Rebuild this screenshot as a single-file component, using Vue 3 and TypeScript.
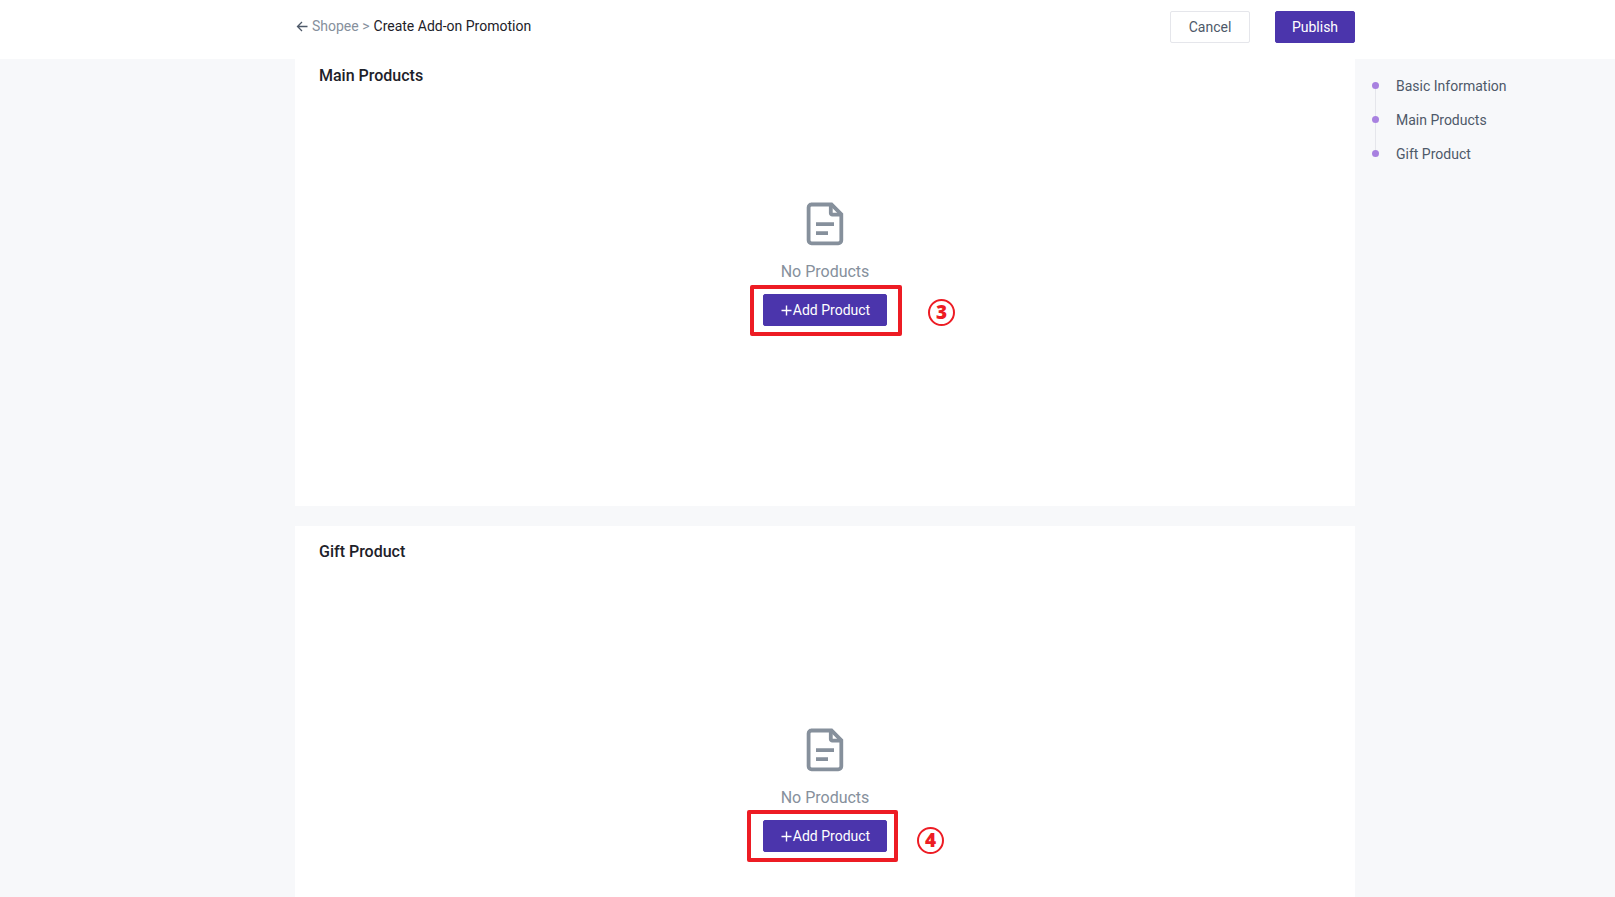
<script setup lang="ts">
interface Section {
  id: string
  title: string
  marker: string
}

const sections: Section[] = [
  { id: 'main', title: 'Main Products', marker: '3' },
  { id: 'gift', title: 'Gift Product', marker: '4' },
]

const anchors: { label: string; target: string }[] = [
  { label: 'Basic Information', target: '#basic' },
  { label: 'Main Products', target: '#main' },
  { label: 'Gift Product', target: '#gift' },
]
</script>

<template>
  <div class="page">
    <header class="topbar columns">
      <div class="topbar-inner">
        <nav class="breadcrumb" aria-label="Breadcrumb">
          <a class="back" href="#back" aria-label="Back">
            <svg width="12" height="12" viewBox="0 0 12 12" fill="none" stroke="currentColor" stroke-width="1.3">
              <path d="M11.5 6.5H1.5M6 2 1.5 6.5 6 11" />
            </svg>
          </a>
          <a class="parent" href="#shopee">Shopee &gt;</a>
          <span>Create Add-on Promotion</span>
        </nav>
        <div class="actions">
          <button type="button" class="btn plain">Cancel</button>
          <button type="button" class="btn primary">Publish</button>
        </div>
      </div>
    </header>

    <div class="body columns">
      <main class="cards">
        <section v-for="s in sections" :id="s.id" :key="s.id" class="card" :class="s.id">
          <h2>{{ s.title }}</h2>
          <div class="empty">
            <svg class="doc" width="38" height="44" viewBox="0 0 38 44" fill="none" stroke="#86909c" stroke-width="3.8">
              <path d="M5 2.5H25.5L35.3 12.3V38.3a3 3 0 0 1-3 3H5.6a3 3 0 0 1-3-3V5.5a3 3 0 0 1 3-3Z" />
              <path d="M24.8 2.8V11.2a1.5 1.5 0 0 0 1.5 1.5H35" />
              <path d="M10 22.2H28M10 31.2H22" />
            </svg>
            <p>No Products</p>
            <div class="add">
              <button type="button" class="btn primary wide">
                <svg width="12" height="12" viewBox="0 0 12 12" stroke="currentColor" stroke-width="1.4">
                  <path d="M6.5 1.5V11.5M1.5 6.5H11.5" />
                </svg>
                Add Product
              </button>
              <span class="frame"></span>
              <span class="marker">{{ s.marker }}</span>
            </div>
          </div>
        </section>
      </main>
      <nav class="anchors" aria-label="Sections">
        <ul>
          <li v-for="a in anchors" :key="a.target">
            <a :href="a.target">{{ a.label }}</a>
          </li>
        </ul>
      </nav>
    </div>
  </div>
</template>

<style>
body {
  margin: 0;
}
</style>

<style scoped>
.page {
  display: flex;
  flex-direction: column;
  height: 100vh;
  overflow: hidden;
  background: #f7f8fa;
  color: #1d2129;
  font: 14px/22px Roboto, "Liberation Sans", sans-serif;
}

a {
  color: inherit;
  text-decoration: none;
}

.columns {
  display: grid;
  grid-template-columns: minmax(0, 295fr) minmax(600px, 1060px) minmax(150px, 260fr);
}

.topbar {
  flex: none;
  height: 59px;
  background: #fff;
}

.topbar-inner {
  grid-column: 2;
  display: flex;
  justify-content: space-between;
  align-items: flex-start;
  padding-top: 11px;
}

.breadcrumb {
  display: flex;
  align-items: center;
  gap: 4px;
  margin-top: 4px;
}

.back {
  display: flex;
  margin-left: 1px;
  color: #4e5969;
}

.parent {
  color: #86909c;
}

.actions {
  display: flex;
  gap: 25px;
}

.btn {
  box-sizing: border-box;
  display: flex;
  align-items: center;
  justify-content: center;
  width: 80px;
  height: 32px;
  padding: 0;
  border: 1px solid #e5e6eb;
  border-radius: 2px;
  font: inherit;
  cursor: pointer;
}

.plain {
  background: #fff;
  color: #4e5969;
}

.primary {
  border-color: #4b35ac;
  background: #4b35ac;
  color: #fff;
}

.wide {
  width: 124px;
  gap: 1px;
}

.body {
  flex: 1;
  min-height: 0;
}

.cards {
  grid-column: 2;
  display: flex;
  flex-direction: column;
  gap: 20px;
  min-height: 0;
}

.card {
  flex: none;
  padding: 0 24px;
  background: #fff;
}

.main {
  padding-top: 5px;
  padding-bottom: 180px;
}

.gift {
  padding-top: 14px;
  padding-bottom: 180px;
}

h2 {
  margin: 0;
  font-size: 16px;
  font-weight: 500;
  line-height: 24px;
}

.empty {
  display: flex;
  flex-direction: column;
  align-items: center;
  padding-top: 114px;
}

.gift .empty {
  padding-top: 164px;
}

.doc {
  display: block;
}

.empty p {
  margin: 14px 0 10px;
  color: #86909c;
  font-size: 16px;
  line-height: 24px;
}

.add {
  position: relative;
}

/* Callout frame and step number lie over the button area */
.frame {
  position: absolute;
  top: -9px;
  left: -13px;
  box-sizing: border-box;
  width: 152px;
  height: 51px;
  border: 4px solid #ed1c24;
  border-radius: 2px;
  pointer-events: none;
}

.marker {
  position: absolute;
  top: 5px;
  left: 165px;
  box-sizing: border-box;
  width: 27px;
  height: 27px;
  border: 2px solid #ed1c24;
  border-radius: 50%;
  color: #ed1c24;
  font: 800 19px/23px "Open Sans", "Noto Sans", sans-serif;
  text-align: center;
}

.gift .frame {
  top: -10px;
  left: -16px;
  width: 151px;
  height: 52px;
}

.gift .marker {
  top: 7px;
  left: 154px;
}

.anchors ul {
  display: flex;
  flex-direction: column;
  gap: 12px;
  margin: 0;
  padding: 16px 0 0 17px;
  list-style: none;
}

.anchors li {
  position: relative;
  padding-left: 24px;
  color: #4e5969;
}

.anchors li::before {
  content: "";
  position: absolute;
  top: 7px;
  left: 0;
  width: 7px;
  height: 7px;
  border-radius: 50%;
  background: #a881e0;
}

.anchors li:not(:last-child)::after {
  content: "";
  position: absolute;
  top: 14px;
  left: 3px;
  width: 1px;
  height: 27px;
  background: #e5e6eb;
}
</style>
